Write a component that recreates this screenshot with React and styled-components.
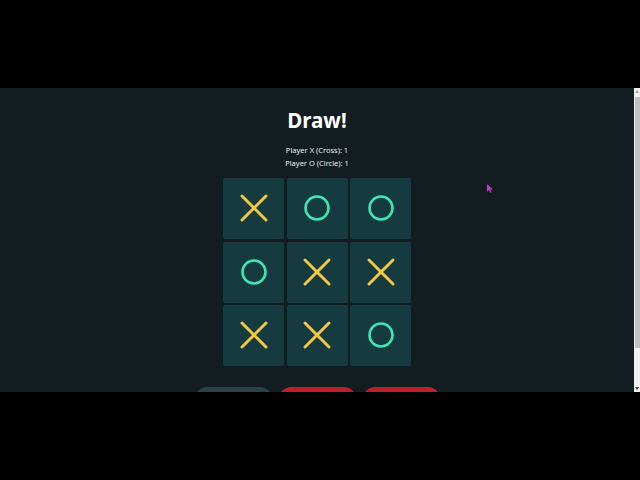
import React from 'react'
import styled, { createGlobalStyle } from 'styled-components'

const GlobalStyle = createGlobalStyle`
  html, body {
    margin: 0;
    padding: 0;
    background: #000;
  }
  * {
    box-sizing: border-box;
  }
`

const Frame = styled.div`
  width: 640px;
  height: 480px;
  display: flex;
  flex-direction: column;
  background: #000;
  overflow: hidden;
`

const Letterbox = styled.div`
  height: 88px;
  flex: none;
  background: #000;
`

const Viewport = styled.div`
  position: relative;
  height: 304px;
  flex: none;
  display: flex;
  overflow: hidden;
  background: #121c21;
`

const Game = styled.main`
  flex: 1;
  display: flex;
  flex-direction: column;
  align-items: center;
  padding-top: 19px;
  font-family: 'Noto Sans', 'Open Sans', sans-serif;
  color: #fff;
`

const Title = styled.h1`
  margin: 0;
  font-size: 20.5px;
  line-height: 26px;
  font-weight: 700;
`

const Scores = styled.div`
  margin-top: 11px;
  display: flex;
  flex-direction: column;
  align-items: center;
`

const Score = styled.p`
  margin: 0;
  font-size: 7.5px;
  line-height: 13px;
  color: #e8ecee;
`

const Board = styled.div`
  margin-top: 8px;
  display: grid;
  grid-template-columns: repeat(3, 61px);
  grid-auto-rows: 61px;
  gap: 2.5px;
`

const Cell = styled.div`
  display: flex;
  align-items: center;
  justify-content: center;
  padding-bottom: 1px;
  background: #153a40;
  border-radius: 2px;
`

const Controls = styled.div`
  margin-top: 21px;
  display: flex;
  gap: 7px;
`

const Button = styled.button`
  width: 77px;
  height: 30px;
  border: none;
  border-radius: 12px;
  background: ${p => (p.$danger ? '#be1f2c' : '#2c4146')};
`

const Scrollbar = styled.div`
  width: 6px;
  flex: none;
  display: flex;
  flex-direction: column;
  align-items: center;
  background: #f1f1f1;
  padding: 2px 0;
`

const Arrow = styled.div`
  width: 0;
  height: 0;
  border-left: 2px solid transparent;
  border-right: 2px solid transparent;
  ${p =>
    p.$down
      ? 'border-top: 3px solid #505050;'
      : 'border-bottom: 3px solid #a3a3a3;'}
`

const Thumb = styled.div`
  margin-top: 4px;
  width: 5px;
  height: 251px;
  background: #c1c1c1;
`

const Track = styled.div`
  flex: 1;
`

const Pointer = styled.svg`
  position: absolute;
  left: 487px;
  top: 96px;
`

const Cross = () => (
  <svg width="30" height="30" viewBox="0 0 30 30">
    <path
      d="M3 3 L27 27 M27 3 L3 27"
      stroke="#f1c83f"
      strokeWidth="3"
      strokeLinecap="round"
      fill="none"
    />
  </svg>
)

const Circle = () => (
  <svg width="30" height="30" viewBox="0 0 30 30">
    <circle cx="15" cy="15" r="11.5" stroke="#44e3b6" strokeWidth="2.6" fill="none" />
  </svg>
)

const board = ['X', 'O', 'O', 'O', 'X', 'X', 'X', 'X', 'O']

export default function App() {
  return (
    <>
      <GlobalStyle />
      <Frame>
        <Letterbox />
        <Viewport>
          <Game>
            <Title>Draw!</Title>
            <Scores>
              <Score>Player X (Cross): 1</Score>
              <Score>Player O (Circle): 1</Score>
            </Scores>
            <Board>
              {board.map((v, i) => (
                <Cell key={i}>{v === 'X' ? <Cross /> : <Circle />}</Cell>
              ))}
            </Board>
            <Controls>
              <Button aria-label="Play again" />
              <Button $danger aria-label="Reset score" />
              <Button $danger aria-label="Quit" />
            </Controls>
          </Game>
          <Scrollbar>
            <Arrow />
            <Thumb />
            <Track />
            <Arrow $down />
          </Scrollbar>
          <Pointer width="6" height="9" viewBox="0 0 6 9">
            <path d="M0 0 L0 8 L2 6 L3.5 9 L4.5 8.5 L3.2 5.6 L6 5.6 Z" fill="#c23bd4" />
          </Pointer>
        </Viewport>
        <Letterbox />
      </Frame>
    </>
  )
}
